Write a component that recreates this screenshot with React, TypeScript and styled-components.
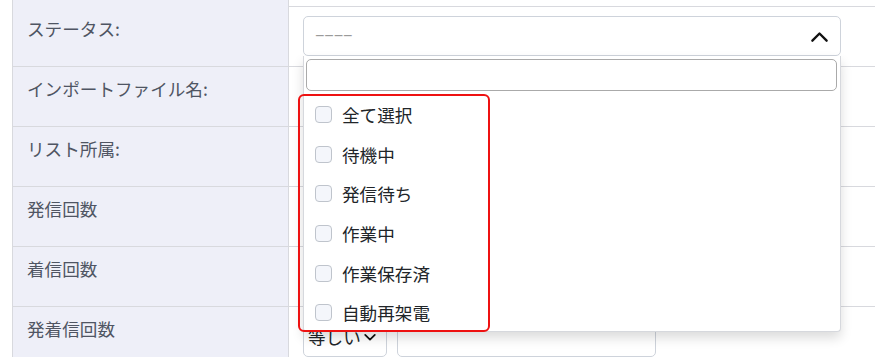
import * as React from 'react';
import styled, {createGlobalStyle, css} from 'styled-components';

//region [[ Styles ]]

const GlobalStyle = createGlobalStyle`
  html, body {
    margin: 0;
    padding: 0;
    background: #ffffff;
    overflow: hidden;
  }
  body {
    font-family: "Noto Sans CJK JP", "Noto Sans", sans-serif;
    color: #212529;
  }
`;

const Page = styled.div`
  width: 875px;
  height: 357px;
  padding-left: 12px;
  box-sizing: border-box;
  overflow: hidden;
`;

const Table = styled.div`
  width: 900px;
  border-left: 1px solid #d8d9de;
`;

const Row = styled.div<{ $height?: number; $top?: boolean }>`
  ${(props) => css`
    display: grid;
    grid-template-columns: 276px 1fr;
    height: ${props.$height ?? 60}px;
    box-sizing: border-box;
    border-top: ${props.$top === false ? 'none' : '1px solid #d8d9de'};
  `};
`;

const LabelCell = styled.div`
  background: #eeeff8;
  border-right: 1px solid #d8d9de;
  padding: 10px 0 0 14px;
  font-size: 17.6px;
  line-height: 24px;
  color: #4f5563;
`;

const ValueCell = styled.div`
  padding: 9px 0 0 14px;
  display: flex;
  gap: 10px;
`;

const SelectWrap = styled.div`
  position: relative;
  width: 538px;
`;

const SelectBox = styled.div`
  height: 40px;
  box-sizing: border-box;
  border: 1px solid #ced3db;
  border-radius: 5px;
  display: flex;
  align-items: center;
  justify-content: space-between;
  padding: 0 11px 0 11px;
`;

const Placeholder = styled.span`
  color: #9a9a9a;
  font-family: "Liberation Sans", Arial, sans-serif;
  font-size: 16px;
`;

const Panel = styled.div`
  position: absolute;
  top: 40px;
  left: 0;
  right: 0;
  z-index: 10;
  height: 276px;
  box-sizing: border-box;
  background: #ffffff;
  border: 1px solid #d6d8dd;
  border-top: none;
  border-radius: 0 0 4px 4px;
  box-shadow: 0 6px 12px rgba(0, 0, 0, 0.14);
  padding: 3px 3px 0 2px;
`;

const SearchInput = styled.input`
  display: block;
  width: 100%;
  height: 32px;
  box-sizing: border-box;
  border: 1px solid #aaaaaa;
  border-radius: 5px;
  outline: none;
  font-size: 16px;
`;

const OptionList = styled.div`
  padding-top: 4px;
`;

const OptionItem = styled.div`
  height: 39.6px;
  display: flex;
  align-items: center;
  padding-left: 9px;
  gap: 10px;
  font-size: 17.6px;
  color: #212529;
`;

const CheckBox = styled.span`
  width: 17px;
  height: 17px;
  box-sizing: border-box;
  border: 1px solid #bfc4cc;
  border-radius: 4px;
  background: #f4f6fb;
  flex-shrink: 0;
`;

const Highlight = styled.div`
  position: absolute;
  left: -6px;
  top: 38px;
  width: 192px;
  height: 238px;
  box-sizing: border-box;
  border: 2px solid #ee1111;
  border-radius: 6px;
  pointer-events: none;
`;

const SmallSelect = styled.div`
  width: 84px;
  height: 41px;
  box-sizing: border-box;
  border: 1px solid #ced3db;
  border-radius: 5px;
  display: flex;
  align-items: center;
  padding-left: 4px;
  gap: 2px;
  font-size: 17.6px;
  color: #212529;
`;

const TextInput = styled.div`
  width: 259px;
  height: 41px;
  box-sizing: border-box;
  border: 1px solid #ced3db;
  border-radius: 5px;
`;

//endregion [[ Styles ]]

//region [[ Functions ]]

const Chevron = ({up, size}: { up?: boolean; size: number }) => (
  <svg width={size} height={size} viewBox="0 0 16 16" fill="none">
    <path
      d={up ? 'M2 11.5 L8 5.5 L14 11.5' : 'M2.5 5.5 L8 11 L13.5 5.5'}
      stroke="#111"
      strokeWidth="2"
      strokeLinecap="round"
      strokeLinejoin="round"
    />
  </svg>
);

const labels = ['インポートファイル名:', 'リスト所属:', '発信回数', '着信回数'];
const options = ['全て選択', '待機中', '発信待ち', '作業中', '作業保存済', '自動再架電'];

//endregion [[ Functions ]]

export default function App() {
  return <Page>
    <GlobalStyle/>
    <Table>
      <Row $height={6} $top={false}>
        <LabelCell/>
        <ValueCell/>
      </Row>
      <Row>
        <LabelCell>ステータス:</LabelCell>
        <ValueCell>
          <SelectWrap>
            <SelectBox>
              <Placeholder>−−−−</Placeholder>
              <Chevron up size={19}/>
            </SelectBox>
            <Panel>
              <SearchInput type="text"/>
              <OptionList>
                {options.map((o) => <OptionItem key={o}>
                  <CheckBox/>
                  {o}
                </OptionItem>)}
              </OptionList>
              <Highlight/>
            </Panel>
          </SelectWrap>
        </ValueCell>
      </Row>
      {labels.map((l) => <Row key={l}>
        <LabelCell>{l}</LabelCell>
        <ValueCell/>
      </Row>)}
      <Row>
        <LabelCell>発着信回数</LabelCell>
        <ValueCell>
          <SmallSelect>等しい<Chevron size={14}/></SmallSelect>
          <TextInput/>
        </ValueCell>
      </Row>
    </Table>
  </Page>;
}
